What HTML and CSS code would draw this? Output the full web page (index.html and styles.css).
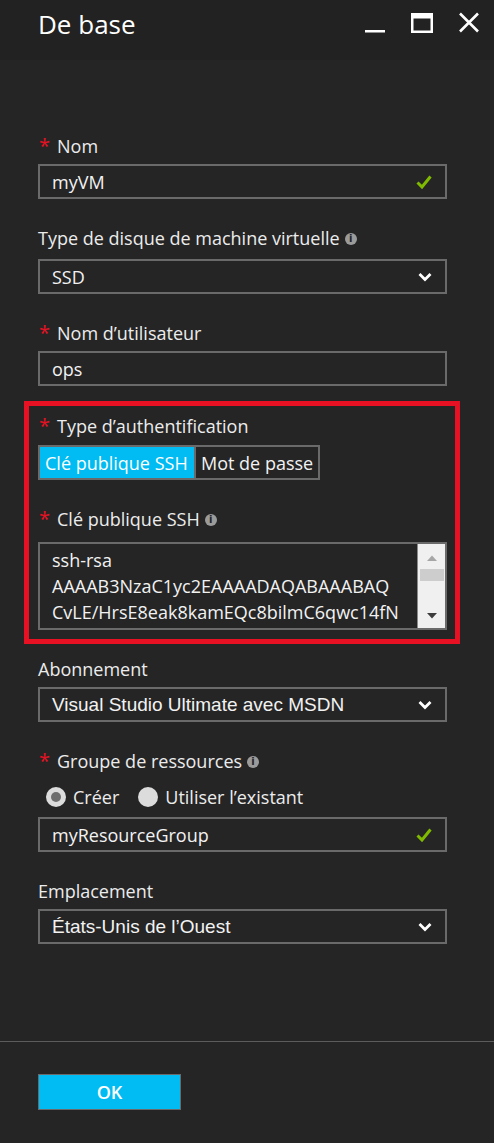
FILE: index.html
```html
<!DOCTYPE html>
<html lang="fr">
<head>
<meta charset="utf-8">
<title>De base</title>
<link rel="stylesheet" href="styles.css">
</head>
<body>
<div class="blade">
  <header class="blade-header">
    <h1 class="title">De base</h1>
    <div class="win-controls">
      <svg class="ctl" width="24" height="24" viewBox="0 0 24 24"><rect x="2" y="19" width="20" height="2.5" fill="#fff"/></svg>
      <svg class="ctl" width="24" height="24" viewBox="0 0 24 24"><rect x="2.25" y="3.25" width="19.5" height="17.5" fill="none" stroke="#fff" stroke-width="2.5"/><rect x="2" y="3" width="20" height="4.5" fill="#fff"/></svg>
      <svg class="ctl" width="24" height="24" viewBox="0 0 24 24"><path d="M3 2.5 L21 20.5 M21 2.5 L3 20.5" stroke="#fff" stroke-width="2.6" fill="none"/></svg>
    </div>
  </header>

  <main class="form">
    <div class="field">
      <div class="label"><span class="req">*</span>Nom</div>
      <div class="control">
        <span class="value">myVM</span>
        <svg class="check" width="16" height="14" viewBox="0 0 16 14"><path d="M1.5 7.5 L6 12 L14.5 1.5" stroke="#7fba00" stroke-width="3" fill="none"/></svg>
      </div>
    </div>

    <div class="field">
      <div class="label label-info">Type de disque de machine virtuelle<span class="info">i</span></div>
      <div class="control">
        <span class="value">SSD</span>
        <svg class="chevron" width="14" height="10" viewBox="0 0 14 10"><path d="M1.5 2 L7 7.5 L12.5 2" stroke="#fff" stroke-width="2.8" fill="none"/></svg>
      </div>
    </div>

    <div class="field">
      <div class="label"><span class="req">*</span>Nom d’utilisateur</div>
      <div class="control">
        <span class="value">ops</span>
      </div>
    </div>

    <section class="highlight">
      <div class="field field-first">
        <div class="label"><span class="req">*</span>Type d’authentification</div>
        <div class="toggle">
          <span class="toggle-opt toggle-on">Clé publique SSH</span>
          <span class="toggle-opt">Mot de passe</span>
        </div>
      </div>

      <div class="field">
        <div class="label label-info"><span class="req">*</span>Clé publique SSH<span class="info">i</span></div>
        <div class="textarea">
          <div class="textarea-text">ssh-rsa<br>AAAAB3NzaC1yc2EAAAADAQABAAABAQ<br>CvLE/HrsE8eak8kamEQc8bilmC6qwc14fN</div>
          <div class="scrollbar">
            <svg width="12" height="8" viewBox="0 0 12 8"><path d="M1 7 L6 1.5 L11 7 Z" fill="#a6a6a6"/></svg>
            <div class="thumb"></div>
            <div class="spacer"></div>
            <svg width="12" height="8" viewBox="0 0 12 8"><path d="M1 1 L6 6.5 L11 1 Z" fill="#3c3c3c"/></svg>
          </div>
        </div>
      </div>
    </section>

    <div class="field field-after-box">
      <div class="label">Abonnement</div>
      <div class="control">
        <span class="value value-arial">Visual Studio Ultimate avec MSDN</span>
        <svg class="chevron" width="14" height="10" viewBox="0 0 14 10"><path d="M1.5 2 L7 7.5 L12.5 2" stroke="#fff" stroke-width="2.8" fill="none"/></svg>
      </div>
    </div>

    <div class="field">
      <div class="label label-info"><span class="req">*</span>Groupe de ressources<span class="info">i</span></div>
      <div class="radios">
        <label class="radio"><span class="radio-dot radio-checked"></span>Créer</label>
        <label class="radio"><span class="radio-dot"></span>Utiliser l’existant</label>
      </div>
      <div class="control control-after-radios">
        <span class="value">myResourceGroup</span>
        <svg class="check" width="16" height="14" viewBox="0 0 16 14"><path d="M1.5 7.5 L6 12 L14.5 1.5" stroke="#7fba00" stroke-width="3" fill="none"/></svg>
      </div>
    </div>

    <div class="field">
      <div class="label">Emplacement</div>
      <div class="control">
        <span class="value value-arial">États-Unis de l’Ouest</span>
        <svg class="chevron" width="14" height="10" viewBox="0 0 14 10"><path d="M1.5 2 L7 7.5 L12.5 2" stroke="#fff" stroke-width="2.8" fill="none"/></svg>
      </div>
    </div>
  </main>

  <footer class="blade-footer">
    <button class="ok-btn" type="button">OK</button>
  </footer>
</div>
</body>
</html>
```

FILE: styles.css
```css
* { box-sizing: border-box; }

html, body {
  margin: 0;
  padding: 0;
  background: #252525;
}

body {
  font-family: "Open Sans", "Noto Sans", sans-serif;
  color: #ececec;
}

.blade {
  width: 494px;
  min-height: 1143px;
  display: flex;
  flex-direction: column;
  background: #252525;
}

.blade-header {
  height: 60px;
  display: flex;
  justify-content: space-between;
  align-items: flex-start;
  padding: 6px 13px 0 38px;
  background: #222222;
}

.title {
  margin: 0;
  font-size: 26px;
  line-height: 36px;
  font-weight: 400;
  color: #ffffff;
}

.win-controls {
  display: flex;
  gap: 23px;
  padding-top: 5px;
}

.ctl { display: block; }

.form {
  padding: 75px 47px 0 38px;
}

.field {
  margin-top: 28px;
}
.form > .field:first-child { margin-top: 0; }

.label {
  display: flex;
  align-items: flex-start;
  font-size: 18px;
  line-height: 22px;
  height: 22px;
  color: #ececec;
}

.label-info { height: 25px; }

.req {
  color: #e81123;
  font-size: 20px;
  margin-right: 7px;
  margin-left: 1px;
}

.info {
  display: inline-flex;
  align-items: center;
  justify-content: center;
  width: 12px;
  height: 12px;
  border-radius: 50%;
  background: #9b9b9b;
  color: #252525;
  font-size: 10px;
  font-weight: 700;
  line-height: 1;
  margin: 6px 0 0 5px;
  font-family: "DejaVu Sans", sans-serif;
}

.control {
  margin-top: 7px;
  height: 35px;
  border: 2px solid #6a6a6a;
  display: flex;
  align-items: center;
  justify-content: space-between;
  padding: 0 13px 0 12px;
  font-size: 18px;
  color: #f2f2f2;
}

.value { line-height: 1; }

.value-arial {
  font-family: "Liberation Sans", Arial, sans-serif;
  font-size: 19px;
}

.check { display: block; }
.chevron { display: block; }

.highlight {
  margin: 15px -13px 0 -14px;
  border: 5px solid #e81123;
  padding: 9px 8px 9px 9px;
}

.highlight .field-first { margin-top: 0; }

.toggle {
  margin-top: 8px;
  display: flex;
  height: 35px;
}

.toggle-opt {
  display: flex;
  align-items: center;
  padding: 0 5px;
  font-size: 18px;
  border: 2px solid #6a6a6a;
  color: #f2f2f2;
}
.toggle-opt + .toggle-opt { border-left: 0; }

.toggle-on {
  background: #00bcf2;
  color: #ffffff;
  width: 158px;
}

.textarea {
  margin-top: 9px;
  height: 88px;
  border: 2px solid #6a6a6a;
  display: flex;
}

.textarea-text {
  flex: 1;
  padding: 3px 0 0 12px;
  font-size: 18px;
  line-height: 26px;
  color: #f2f2f2;
  overflow: hidden;
  white-space: nowrap;
}

.scrollbar {
  width: 28px;
  background: #f0f0f0;
  border-left: 1px solid #8a8a8a;
  display: flex;
  flex-direction: column;
  align-items: center;
  padding: 10px 0 8px;
}
.scrollbar svg { display: block; }

.thumb {
  margin-top: 7px;
  width: 24px;
  height: 12px;
  background: #cdcdcd;
}
.spacer { flex: 1; }

.field-after-box { margin-top: 14px; }

.radios {
  margin-top: 12px;
  display: flex;
  gap: 19px;
  padding-left: 8px;
  height: 20px;
  align-items: center;
}

.radio {
  display: flex;
  align-items: center;
  gap: 7px;
  font-size: 18px;
  color: #ececec;
}

.radio-dot {
  width: 20px;
  height: 20px;
  border-radius: 50%;
  background: #dcdcdc;
  display: flex;
  align-items: center;
  justify-content: center;
}
.radio-checked::after {
  content: "";
  width: 10px;
  height: 10px;
  border-radius: 50%;
  background: #6e6e6e;
}

.control-after-radios { margin-top: 10px; }

.blade-footer {
  margin-top: auto;
  border-top: 1px solid #5c5c5c;
  padding: 32px 0 33px 38px;
}

.ok-btn {
  display: block;
  width: 143px;
  height: 36px;
  background: #00bcf2;
  border: 1px solid #6a6a6a;
  color: #ffffff;
  font-family: "Open Sans", sans-serif;
  font-size: 18px;
  font-weight: 600;
  padding: 0;
}
```
